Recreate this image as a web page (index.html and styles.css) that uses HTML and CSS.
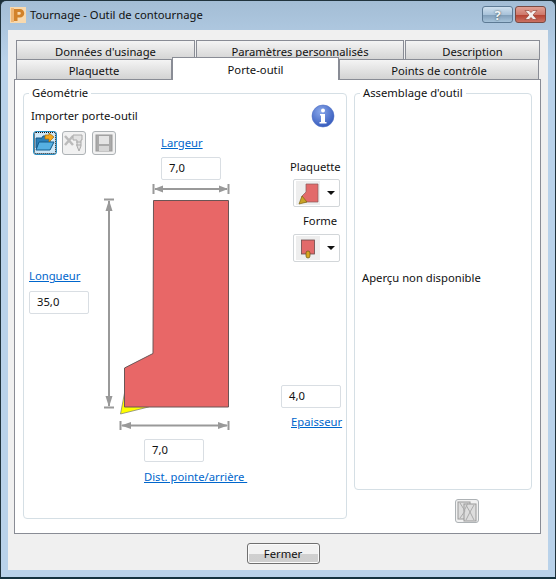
FILE: index.html
```html
<!DOCTYPE html>
<html lang="fr">
<head>
    <meta charset="UTF-8">
    <title>Tournage - Outil de contournage</title>
    <link rel="stylesheet" href="styles.css">
</head>
<body>
    <div class="window">
        <header class="titlebar">
            <svg class="app-icon" width="16" height="16" viewBox="0 0 16 16">
                <rect width="16" height="16" fill="#f8d9ae"/>
                <rect x="1" y="1" width="3" height="14" fill="#eeb676"/>
                <path d="M4 2h6a4 4 0 0 1 0 8.500H7.500V14H4zM7.500 5v2.700h2a1.350 1.350 0 0 0 0-2.700z" fill="#d2822a" fill-rule="evenodd"/>
            </svg>
            <span class="title">Tournage - Outil de contournage</span>
            <button class="cap-btn help">?</button>
            <button class="cap-btn close">
                <svg width="16" height="10" viewBox="0 0 16 10"><path d="M2 .5h4l2 2 2-2h4L10 5l4 4.500h-4l-2-2-2 2H2L6 5z" fill="#f4f0ee" stroke="#8a3a2c" stroke-width=".6"/></svg>
            </button>
        </header>

        <div class="client">
            <div class="tabs">
                <div class="tab-row back">
                    <div class="tab t-donnees">Données d'usinage</div>
                    <div class="tab t-params">Paramètres personnalisés</div>
                    <div class="tab t-desc">Description</div>
                </div>
                <div class="tab-row front">
                    <div class="tab t-plaquette">Plaquette</div>
                    <div class="tab active t-porte">Porte-outil</div>
                    <div class="tab t-points">Points de contrôle</div>
                </div>
            </div>

            <div class="panel">
                <fieldset class="group geometry">
                    <legend>Géométrie</legend>

                    <!-- schema cote, les elements sont places sur le dessin -->
                    <svg class="drawing" width="324" height="425" viewBox="23 93 324 425">
                        <g fill="#999" stroke="#999">
                            <path d="M153.500 184v10M228.500 184v10M155 189h72" fill="none" stroke-width="2"/>
                            <path d="M154 189l9-3.500v7zM228 189l-9-3.500v7z" stroke="none"/>
                            <path d="M104 199.500h10M104 407.500h10M109 201v205" fill="none" stroke-width="2"/>
                            <path d="M109 200l-3.500 11h7zM109 407l-3.500-11h7z" stroke="none"/>
                            <path d="M120.500 421v9M228.500 421v9M122 425.500h105" fill="none" stroke-width="2"/>
                            <path d="M121 425.500l10-3.500v7zM228 425.500l-10-3.500v7z" stroke="none"/>
                        </g>
                        <path d="M124.500 393l-4 21 28-7z" fill="#ffff00" stroke="#777" stroke-width=".7"/>
                        <path d="M153.500 200.500h75v206.500h-104v-39l28.500-14.500z" fill="#e86767" stroke="#6b5555"/>
                    </svg>

                    <div class="caption import">Importer porte-outil</div>
                    <button class="tool focused t1">
                        <svg width="20" height="20" viewBox="0 0 20 20">
                            <path d="M1 5h6l1-2h7v12H1z" fill="#2a7fb8" stroke="#135a8a"/>
                            <path d="M1 17l3-8h15l-4 8z" fill="#56b0e2" stroke="#135a8a"/>
                            <path d="M10 2h4V0l5 4-5 5V6h-4z" fill="#f3a81e" stroke="#a86d0a" stroke-width=".7"/>
                        </svg>
                    </button>
                    <button class="tool t2">
                        <svg width="20" height="20" viewBox="0 0 20 20">
                            <path d="M1 3l8 9M9 3l-8 9" stroke="#bbb" stroke-width="2.500" fill="none"/>
                            <path d="M9 2h9v5h-1v6l-2 5-2-5V7H9z" fill="#e2e2e2" stroke="#aaa"/>
                            <path d="M12 9h5M12 12h5" stroke="#aaa"/>
                        </svg>
                    </button>
                    <button class="tool t3">
                        <svg width="18" height="18" viewBox="0 0 18 18">
                            <rect x="1" y="1" width="16" height="16" fill="#aaa" stroke="#999"/>
                            <rect x="4" y="2" width="10" height="8" fill="#e4e4e4"/>
                            <rect x="4" y="12" width="10" height="5" fill="#d6d6d6"/>
                        </svg>
                    </button>

                    <svg class="info" width="24" height="24" viewBox="0 0 24 24">
                        <defs>
                            <radialGradient id="infoFill" cx=".4" cy=".3" r=".8">
                                <stop offset="0" stop-color="#8aa8ea"/>
                                <stop offset="1" stop-color="#2c52b8"/>
                            </radialGradient>
                        </defs>
                        <circle cx="12" cy="12" r="11" fill="url(#infoFill)" stroke="#4f6fc4" stroke-width=".6"/>
                        <circle cx="12" cy="6.500" r="2" fill="#fff"/>
                        <path d="M9 10h5v8h1.500v1.500h-7V18H10v-6.500H9z" fill="#fff"/>
                    </svg>

                    <a class="link l-largeur" href="#">Largeur</a>
                    <div class="value v-largeur">7,0</div>

                    <div class="caption c-plaquette">Plaquette</div>
                    <button class="combo c1">
                        <span class="combo-img">
                            <svg width="24" height="24" viewBox="0 0 24 24">
                                <path d="M10 3h12v18H6v-6l4-4z" fill="#e26a6a" stroke="#8a5a5a" stroke-width=".7"/>
                                <path d="M6 15l-3 8 8-2z" fill="#c9a227" stroke="#7d6410" stroke-width=".7"/>
                            </svg>
                        </span>
                        <span class="arrow"></span>
                    </button>

                    <div class="caption c-forme">Forme</div>
                    <button class="combo c2">
                        <span class="combo-img">
                            <svg width="24" height="24" viewBox="0 0 24 24">
                                <rect x="5.500" y="4" width="13" height="14" fill="#e26a6a" stroke="#6b4a4a" stroke-width=".8"/>
                                <rect x="10" y="15" width="4" height="7" rx="2" fill="#d9a520" stroke="#6b5510" stroke-width=".7"/>
                            </svg>
                        </span>
                        <span class="arrow"></span>
                    </button>

                    <a class="link l-longueur" href="#">Longueur</a>
                    <div class="value v-longueur">35,0</div>

                    <div class="value v-epaisseur">4,0</div>
                    <a class="link l-epaisseur" href="#">Epaisseur</a>

                    <div class="value v-dist">7,0</div>
                    <a class="link l-dist" href="#">Dist. pointe/arrière </a>
                </fieldset>

                <div class="side">
                    <fieldset class="group assembly">
                        <legend>Assemblage d'outil</legend>
                        <p class="no-preview">Aperçu non disponible</p>
                    </fieldset>
                    <button class="tool preview-btn">
                        <svg width="22" height="22" viewBox="0 0 22 22">
                            <rect x="2" y="2" width="12" height="17" fill="#ddd" stroke="#999"/>
                            <rect x="8" y="4" width="12" height="17" fill="#ddd" stroke="#999"/>
                            <path d="M4 3l5 8-5 7M12 3l-4 8M10 5l4 7-4 8M18 5l-4 7 4 8" fill="none" stroke="#aaa"/>
                        </svg>
                    </button>
                </div>
            </div>

            <footer class="actions">
                <button class="close-btn">Fermer</button>
            </footer>
        </div>
    </div>
</body>
</html>
```

FILE: styles.css
```css
* {
    box-sizing: border-box;
}

html, body {
    margin: 0;
    padding: 0;
}

body {
    width: 556px;
    height: 579px;
    overflow: hidden;
    background: #1c2f38;
    font-family: "Noto Sans", "Open Sans", sans-serif;
    font-size: 11.25px;
    line-height: 14px;
    color: #111;
}

button {
    font: inherit;
    color: inherit;
    padding: 0;
}

.window {
    width: 556px;
    height: 579px;
    display: flex;
    flex-direction: column;
    padding: 1px;
    border-radius: 6px 6px 0 0;
    border: 1px solid #20333d;
    border-bottom: 2px solid #14323f;
    background: linear-gradient(#a3bdd5, #b9d2ea 60px);
}

/* barre de titre */
.titlebar {
    height: 28px;
    display: flex;
    align-items: center;
    padding: 0 8px 3px 8px;
    flex: none;
}

.app-icon {
    margin-right: 4px;
}

.title {
    flex: 1;
}

.cap-btn {
    width: 31px;
    height: 17px;
    display: flex;
    align-items: center;
    justify-content: center;
    border: 1px solid #5d7a94;
    border-radius: 3px;
    font-weight: bold;
    color: #f2f5f8;
    font-size: 13px;
    text-shadow: 0 0 2px #344;
}

.help {
    background: linear-gradient(#cfe0ee, #a9c3da 50%, #7f9db8 52%, #a7c3da);
    margin-right: 2px;
}

.close {
    background: linear-gradient(#e0a195, #cf7a6c 50%, #b4402f 52%, #cb7263);
    border-color: #7a4a42;
}

/* zone client */
.client {
    flex: 1;
    margin: 0 6px 6px;
    background: #f0f0f0;
    padding: 8px 6px 0 6px;
    display: flex;
    flex-direction: column;
}

.tabs {
    height: 41px;
    flex: none;
    padding: 2px 1px 0 2px;
}

.tab-row {
    display: flex;
}

.tab-row.back {
    height: 19px;
}

.tab-row.front {
    height: 20px;
    position: relative;
    align-items: flex-end;
}

.tab {
    height: 20px;
    display: flex;
    align-items: center;
    justify-content: center;
    background: linear-gradient(#f4f4f4, #d3d3d3);
    border: 1px solid #898c95;
    border-bottom: 0;
    padding-top: 2px;
}

.tab.active {
    height: 23px;
    background: #fff;
    margin-bottom: -1px;
    position: relative;
    z-index: 1;
}

.t-donnees { width: 179px; margin-right: 1px; }
.t-params { width: 208px; margin-right: 1px; }
.t-desc { width: 135px; }
.t-plaquette { width: 156px; }
.t-porte { width: 167px; }
.t-points { width: 200px; }

.panel {
    height: 455px;
    flex: none;
    background: #fff;
    border: 1px solid #898c95;
    margin-right: 1px;
    padding: 6px 8px 0 8px;
    display: flex;
    gap: 7px;
    align-items: flex-start;
}

/* cadres */
.group {
    margin: 0;
    padding: 0;
    border: 1px solid #d5dfe5;
    border-radius: 4px;
    position: relative;
    min-width: 0;
}

.group legend {
    margin-left: 5px;
    padding: 0 3px;
    line-height: 14px;
}

.geometry {
    width: 324px;
    height: 433px;
}

.side {
    width: 178px;
    display: flex;
    flex-direction: column;
    align-items: center;
}

.assembly {
    width: 178px;
    height: 404px;
}

.no-preview {
    margin: 0;
    position: absolute;
    left: 7px;
    top: 171px;
}

.preview-btn {
    margin: 9px 0 0 48px;
}

/* dessin */
.drawing {
    position: absolute;
    left: -1px;
    top: -7px;
}

.caption,
.link,
.value,
.tool.t1,
.tool.t2,
.tool.t3,
.info,
.combo {
    position: absolute;
}

.link {
    color: #0066cc;
    text-decoration: underline;
}

.value {
    width: 60px;
    height: 23px;
    background: #fff;
    border: 1px solid #d9dee3;
    border-radius: 2px;
    padding: 3px 0 0 7px;
}

.tool {
    width: 24px;
    height: 24px;
    background: #f1f1f1;
    border: 1px solid #adb2b5;
    border-radius: 3px;
    display: flex;
    align-items: center;
    justify-content: center;
}

.tool.focused {
    background: #cfe8f8;
    border: 1px solid #2a8fc4;
    outline: 1px dotted #111;
    outline-offset: -2px;
}

.combo {
    width: 47px;
    height: 28px;
    background: #fff;
    border: 1px solid #d2d6d9;
    border-radius: 2px;
    display: flex;
    align-items: center;
    padding-left: 2px;
}

.combo-img {
    width: 24px;
    height: 24px;
    background: #eee;
    display: block;
}

.arrow {
    margin-left: 7px;
    width: 0;
    height: 0;
    border-left: 4px solid transparent;
    border-right: 4px solid transparent;
    border-top: 4px solid #111;
}

.import { left: 7px; top: 9px; }
.t1 { left: 9px; top: 31px; }
.t2 { left: 38px; top: 31px; }
.t3 { left: 68px; top: 31px; }
.info { left: 287px; top: 4px; }

.l-largeur { left: 137px; top: 36px; }
.v-largeur { left: 137px; top: 57px; }
.c-plaquette { left: 266px; top: 60px; }
.c1 { left: 269px; top: 79px; }
.c-forme { left: 279px; top: 114px; }
.c2 { left: 269px; top: 134px; }
.l-longueur { left: 5px; top: 169px; }
.v-longueur { left: 5px; top: 191px; }
.v-epaisseur { left: 257px; top: 285px; }
.l-epaisseur { left: 267px; top: 315px; }
.v-dist { left: 120px; top: 339px; }
.l-dist { left: 120px; top: 370px; white-space: pre; }

/* bas de fenetre */
.actions {
    flex: 1;
    display: flex;
    justify-content: center;
    align-items: flex-start;
    padding: 9px 0 0 10px;
}

.close-btn {
    width: 73px;
    height: 21px;
    border: 1px solid #707070;
    border-radius: 3px;
    background: linear-gradient(#f2f2f2 50%, #d0d0d0 52%, #cfcfcf);
    box-shadow: inset 0 0 0 1px #fbfbfb;
}
```
